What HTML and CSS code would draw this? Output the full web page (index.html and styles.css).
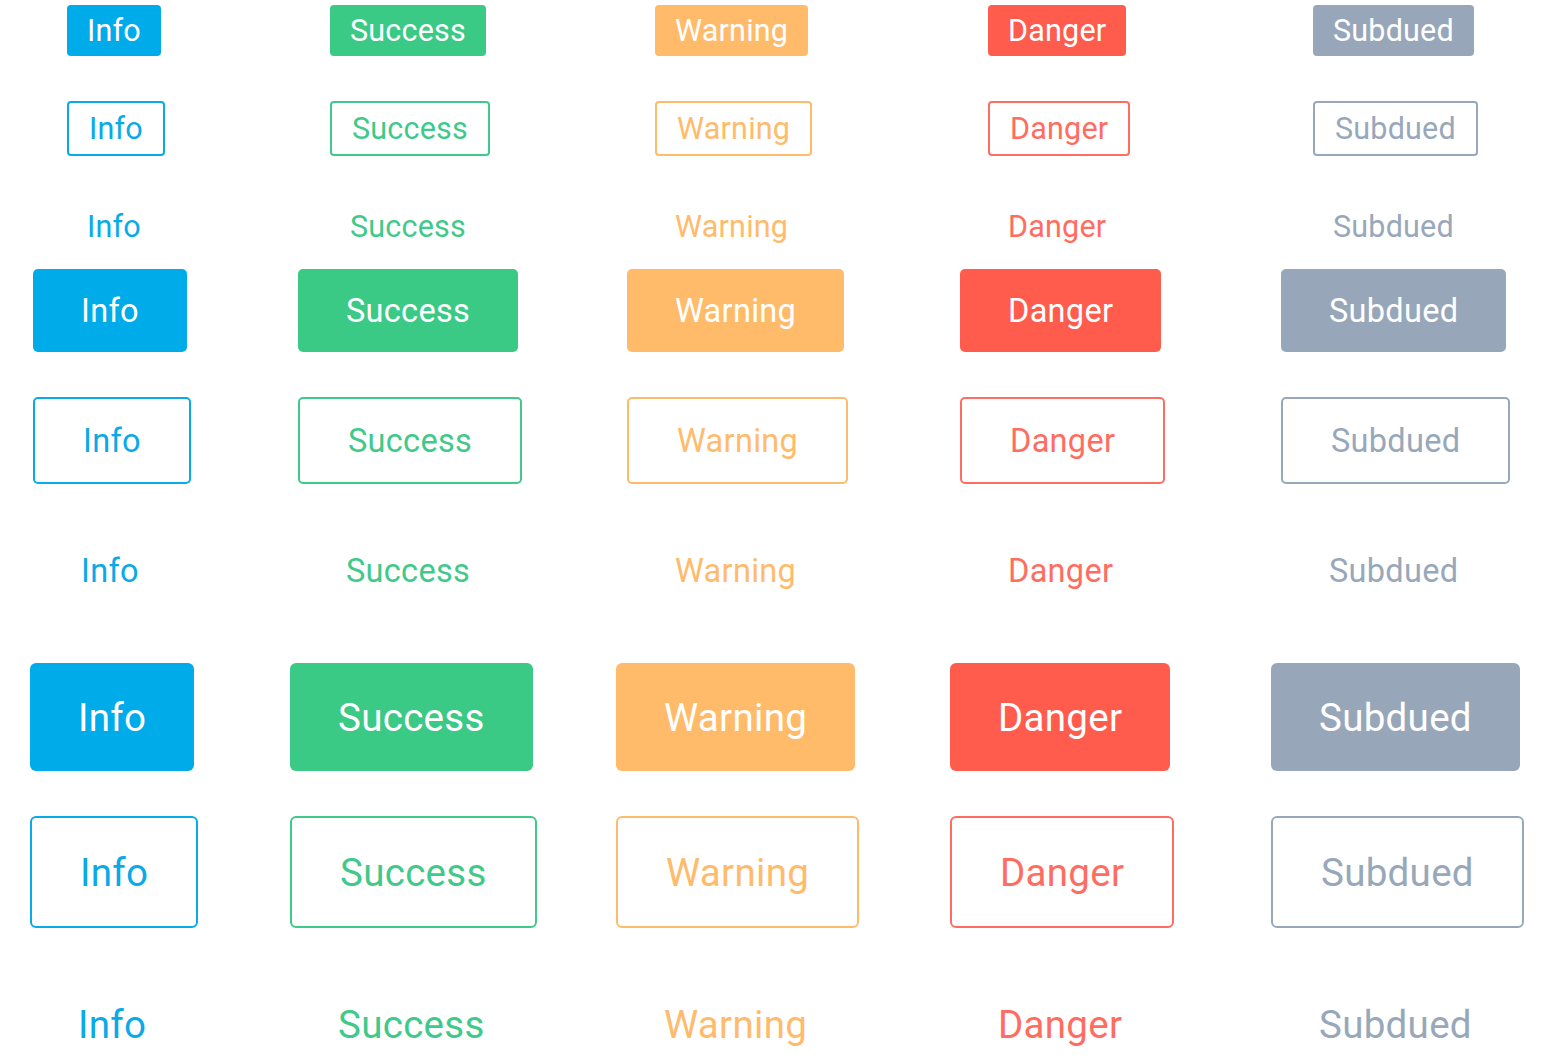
FILE: index.html
```html
<!DOCTYPE html>
<html lang="en">
<head>
<meta charset="utf-8">
<title>Button styles</title>
<link rel="stylesheet" href="styles.css">
</head>
<body>
<main class="sheet">
  <section class="set set-sm">
    <button class="btn fill info">Info</button>
    <button class="btn fill success">Success</button>
    <button class="btn fill warning">Warning</button>
    <button class="btn fill danger">Danger</button>
    <button class="btn fill subdued">Subdued</button>

    <button class="btn outline info">Info</button>
    <button class="btn outline success">Success</button>
    <button class="btn outline warning">Warning</button>
    <button class="btn outline danger">Danger</button>
    <button class="btn outline subdued">Subdued</button>

    <button class="btn plain info">Info</button>
    <button class="btn plain success">Success</button>
    <button class="btn plain warning">Warning</button>
    <button class="btn plain danger">Danger</button>
    <button class="btn plain subdued">Subdued</button>
  </section>

  <section class="set set-md">
    <button class="btn fill info">Info</button>
    <button class="btn fill success">Success</button>
    <button class="btn fill warning">Warning</button>
    <button class="btn fill danger">Danger</button>
    <button class="btn fill subdued">Subdued</button>

    <button class="btn outline info">Info</button>
    <button class="btn outline success">Success</button>
    <button class="btn outline warning">Warning</button>
    <button class="btn outline danger">Danger</button>
    <button class="btn outline subdued">Subdued</button>

    <button class="btn plain info">Info</button>
    <button class="btn plain success">Success</button>
    <button class="btn plain warning">Warning</button>
    <button class="btn plain danger">Danger</button>
    <button class="btn plain subdued">Subdued</button>
  </section>

  <section class="set set-lg">
    <button class="btn fill info">Info</button>
    <button class="btn fill success">Success</button>
    <button class="btn fill warning">Warning</button>
    <button class="btn fill danger">Danger</button>
    <button class="btn fill subdued">Subdued</button>

    <button class="btn outline info">Info</button>
    <button class="btn outline success">Success</button>
    <button class="btn outline warning">Warning</button>
    <button class="btn outline danger">Danger</button>
    <button class="btn outline subdued">Subdued</button>

    <button class="btn plain info">Info</button>
    <button class="btn plain success">Success</button>
    <button class="btn plain warning">Warning</button>
    <button class="btn plain danger">Danger</button>
    <button class="btn plain subdued">Subdued</button>
  </section>
</main>
</body>
</html>
```

FILE: styles.css
```css
html, body {
  margin: 0;
  padding: 0;
  background: #ffffff;
}

body {
  font-family: Roboto, "Noto Sans", sans-serif;
  overflow: hidden;
  height: 1062px;
}

.sheet {
  display: flex;
  flex-direction: column;
  padding-top: 5px;
}

.set {
  display: grid;
  row-gap: 45px;
  justify-items: start;
  align-items: start;
  position: relative;
}

.set-sm {
  grid-template-columns: 263px 325px 333px 325px 1fr;
  padding-left: 67px;
}

.set-md {
  grid-template-columns: 265px 329px 333px 321px 1fr;
  padding-left: 33px;
  margin-top: 17px;
}

.set-md::before {
  content: "";
  position: absolute;
  left: 511px;
  width: 16px;
  top: -6px;
  bottom: -21px;
  background: #fafafa;
  z-index: -1;
}

.set-lg {
  grid-template-columns: 260px 326px 334px 321px 1fr;
  padding-left: 30px;
  margin-top: 51px;
}

.btn {
  font-family: Roboto, "Noto Sans", sans-serif;
  font-weight: 400;
  border: 0;
  margin: 0;
  background: transparent;
  white-space: nowrap;
  cursor: pointer;
  box-sizing: content-box;
}

.set-sm .btn {
  font-size: 30.5px;
  line-height: 30px;
  padding: 11px 20px 10px;
  border-radius: 4px;
  letter-spacing: 0.2px;
}

.set-md .btn {
  font-size: 32.5px;
  line-height: 32px;
  padding: 26px 48px 25px;
  border-radius: 5px;
  letter-spacing: 0.3px;
}

.set-lg .btn {
  font-size: 38.5px;
  line-height: 38px;
  padding: 36px 48px 34px;
  border-radius: 6px;
  letter-spacing: 0.3px;
}

.set-lg .btn.plain {
  padding-top: 33px;
  padding-bottom: 37px;
}

.btn.outline {
  border: 2px solid currentColor;
}

.btn.fill {
  color: #ffffff;
}

.fill.info { background: #00abe9; }
.fill.success { background: #3bc986; }
.fill.warning { background: #ffbb6a; }
.fill.danger { background: #ff5c4e; }
.fill.subdued { background: #97a7b9; }

.outline.info, .plain.info { color: #0aa9e8; }
.outline.success, .plain.success { color: #3fc98a; }
.outline.warning, .plain.warning { color: #ffbb6c; }
.outline.danger, .plain.danger { color: #ff6d60; }
.outline.subdued, .plain.subdued { color: #98a8ba; }
```
